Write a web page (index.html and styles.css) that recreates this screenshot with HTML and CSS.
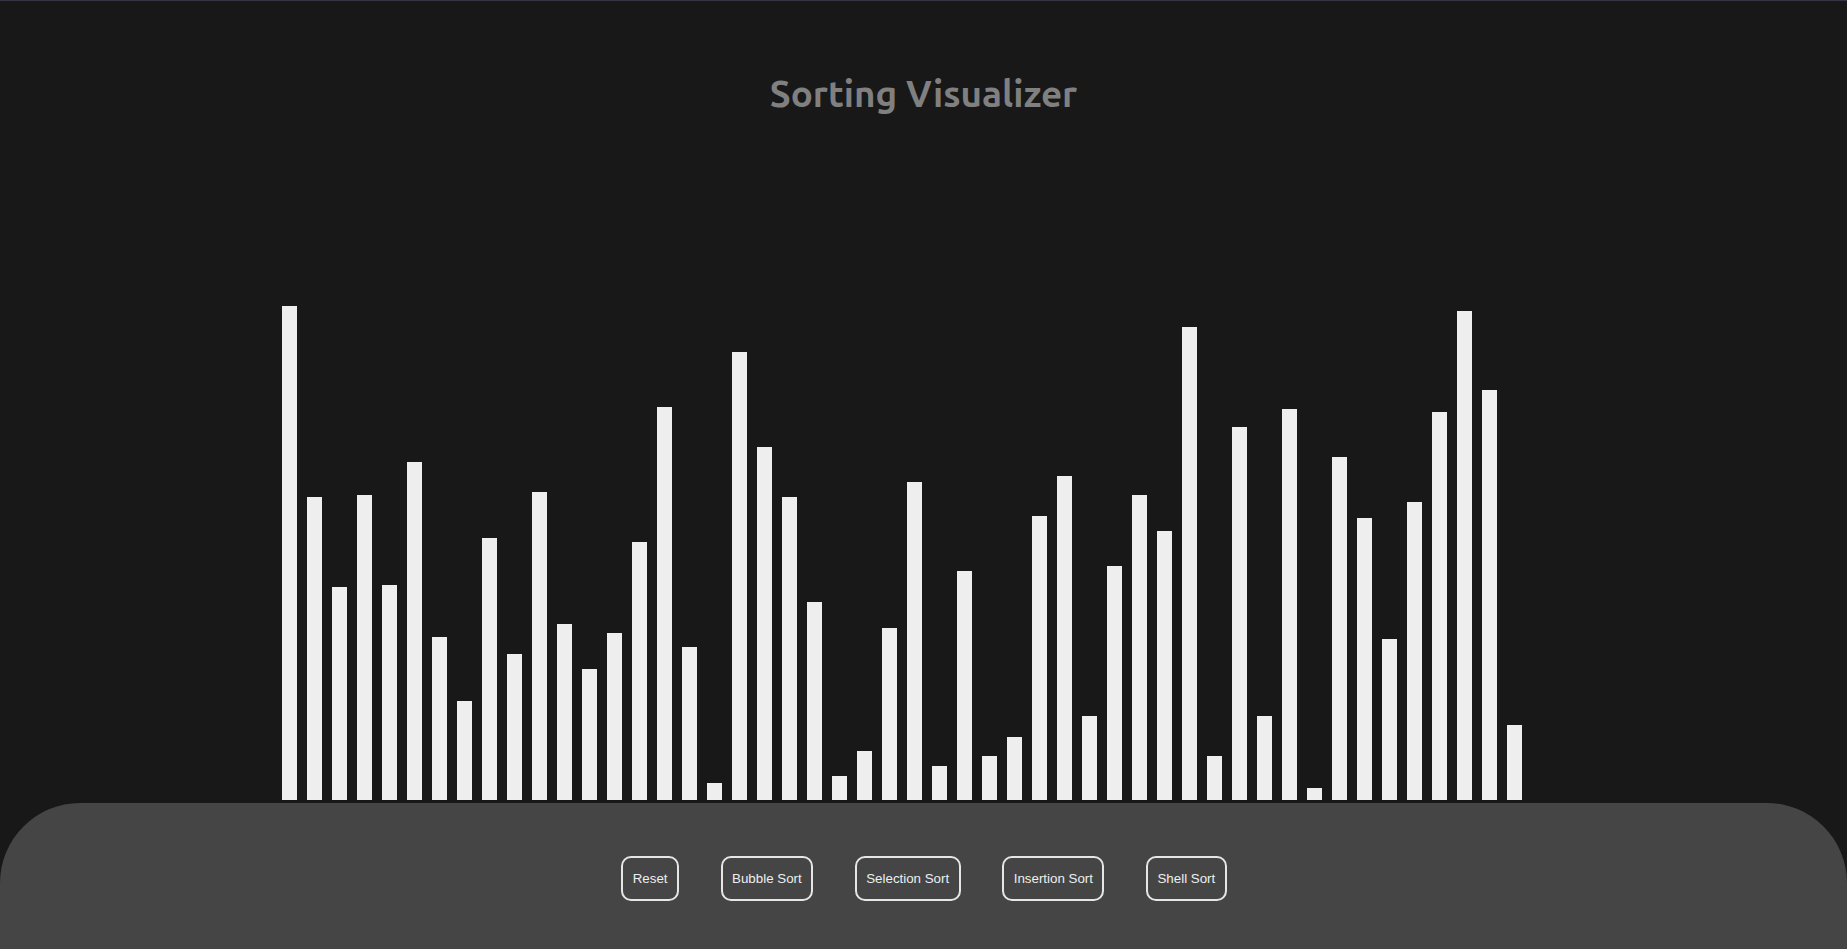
FILE: index.html
```html
<!DOCTYPE html>
<html lang="en">
<head>
<meta charset="utf-8">
<title>Sorting Visualizer</title>
<link rel="stylesheet" href="styles.css">
</head>
<body>
<h1 class="title">Sorting Visualizer</h1>
<div class="bars">
<div class="bar" style="height:494px"></div>
<div class="bar" style="height:303px"></div>
<div class="bar" style="height:213px"></div>
<div class="bar" style="height:305px"></div>
<div class="bar" style="height:215px"></div>
<div class="bar" style="height:338px"></div>
<div class="bar" style="height:163px"></div>
<div class="bar" style="height:99px"></div>
<div class="bar" style="height:262px"></div>
<div class="bar" style="height:146px"></div>
<div class="bar" style="height:308px"></div>
<div class="bar" style="height:176px"></div>
<div class="bar" style="height:131px"></div>
<div class="bar" style="height:167px"></div>
<div class="bar" style="height:258px"></div>
<div class="bar" style="height:393px"></div>
<div class="bar" style="height:153px"></div>
<div class="bar" style="height:17px"></div>
<div class="bar" style="height:448px"></div>
<div class="bar" style="height:353px"></div>
<div class="bar" style="height:303px"></div>
<div class="bar" style="height:198px"></div>
<div class="bar" style="height:24px"></div>
<div class="bar" style="height:49px"></div>
<div class="bar" style="height:172px"></div>
<div class="bar" style="height:318px"></div>
<div class="bar" style="height:34px"></div>
<div class="bar" style="height:229px"></div>
<div class="bar" style="height:44px"></div>
<div class="bar" style="height:63px"></div>
<div class="bar" style="height:284px"></div>
<div class="bar" style="height:324px"></div>
<div class="bar" style="height:84px"></div>
<div class="bar" style="height:234px"></div>
<div class="bar" style="height:305px"></div>
<div class="bar" style="height:269px"></div>
<div class="bar" style="height:473px"></div>
<div class="bar" style="height:44px"></div>
<div class="bar" style="height:373px"></div>
<div class="bar" style="height:84px"></div>
<div class="bar" style="height:391px"></div>
<div class="bar" style="height:12px"></div>
<div class="bar" style="height:343px"></div>
<div class="bar" style="height:282px"></div>
<div class="bar" style="height:161px"></div>
<div class="bar" style="height:298px"></div>
<div class="bar" style="height:388px"></div>
<div class="bar" style="height:489px"></div>
<div class="bar" style="height:410px"></div>
<div class="bar" style="height:75px"></div>
</div>
<div class="footer">
<button class="btn">Reset</button>
<button class="btn">Bubble Sort</button>
<button class="btn">Selection Sort</button>
<button class="btn">Insertion Sort</button>
<button class="btn">Shell Sort</button>
</div>
</body>
</html>
```
FILE: styles.css
```css
html, body {
  margin: 0;
  padding: 0;
}
body {
  box-sizing: border-box;
  height: 100vh;
  background: #181818;
  border-top: 1px solid #34344a;
  display: flex;
  flex-direction: column;
  overflow: hidden;
}
.title {
  margin: 0;
  padding-top: 69px;
  text-align: center;
  font-family: "Ubuntu", "Lato", "Open Sans", sans-serif;
  font-weight: bold;
  font-size: 36.8px;
  line-height: 48px;
  color: #808080;
}
.bars {
  flex: 1;
  display: flex;
  align-items: flex-end;
  gap: 10px;
  padding-left: 282px;
}
.bar {
  width: 15px;
  flex: none;
  background: #eeeeee;
}
.footer {
  flex: none;
  box-sizing: border-box;
  height: 146px;
  margin-top: 3px;
  padding-top: 4px;
  padding-left: 1px;
  background: #454545;
  border-radius: 80px 80px 0 0;
  display: flex;
  justify-content: center;
  align-items: center;
  gap: 41.5px;
}
.btn {
  font-family: "Liberation Sans", Arial, sans-serif;
  font-size: 13.33px;
  line-height: 15px;
  color: #eeeeee;
  background: transparent;
  border: 2px solid #e6e6e6;
  border-radius: 10px;
  padding: 13px 9.5px;
  margin: 0;
}
```
